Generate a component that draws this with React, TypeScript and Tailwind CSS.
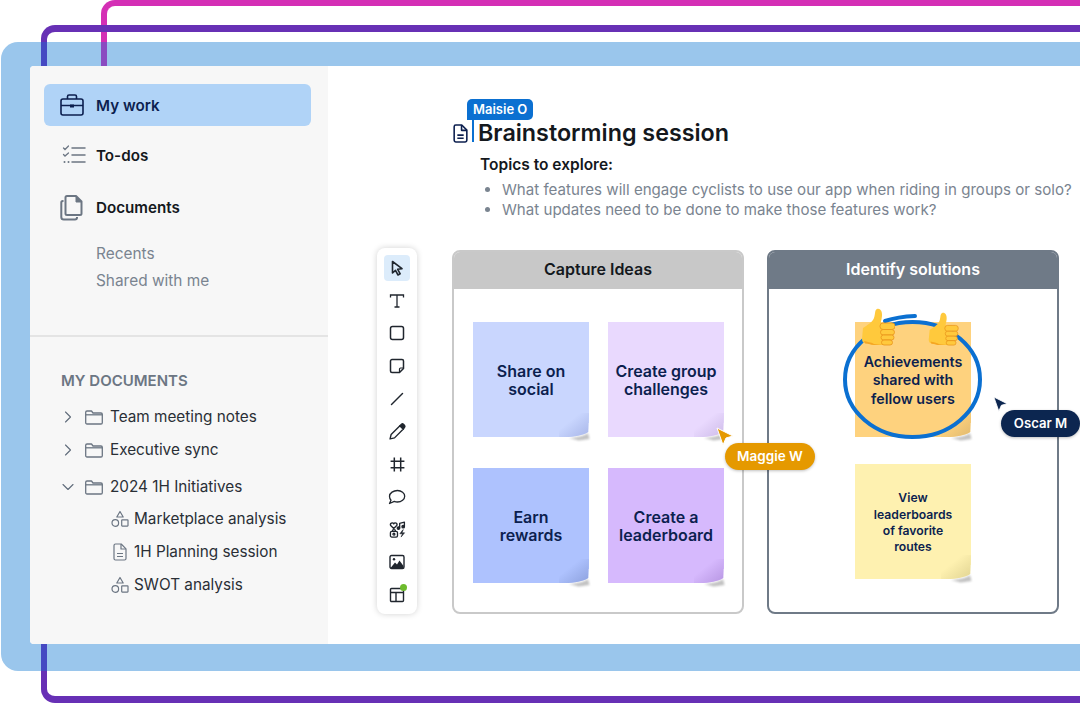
import React from 'react';
import { ChevronDown, ChevronRight } from 'lucide-react';

const Thumb = ({ className }: { className: string }) => (
  <svg viewBox="0 0 33 38" className={className}>
    <path
      fill="#FFC93C"
      d="M1 20C5 17 10 15 12 10C13.500 6 12.500 2 15 1C18 0 20.500 3 20 8C19.600 12 18.500 14 19 15L26 15L26 37L12 37C9 37 7 35 3 35C1 35 0 33 0 31Z"
    />
    <path fill="#F5A623" d="M2 33C5 34 9 34 12 36L20 37L12 37C9 37 7 35.500 3 35.500Z" />
    <g fill="#FFC93C" stroke="#E9931A" strokeWidth="0.8">
      <rect x="18" y="15" width="15" height="6.500" rx="3" />
      <rect x="18.500" y="21.500" width="14" height="5.500" rx="2.700" />
      <rect x="19" y="27" width="13" height="5" rx="2.500" />
      <rect x="19.500" y="32" width="11" height="5" rx="2.500" />
    </g>
  </svg>
);

// folded corner of a sticky note, the note's own corner sits at (30,24)
const Curl = ({ fill, shade }: { fill: string; shade: string }) => (
  <svg viewBox="0 0 36 30" className="absolute -right-[6px] -bottom-[6px] w-[36px] h-[30px]">
    <defs>
      <linearGradient id={`curl-${shade}`} x1="0.35" y1="0.35" x2="0.95" y2="0.95">
        <stop offset="0" stopColor={shade} stopOpacity="0" />
        <stop offset="1" stopColor={shade} stopOpacity="1" />
      </linearGradient>
      <filter id={`blur-${shade}`} x="-30%" y="-50%" width="160%" height="200%">
        <feGaussianBlur stdDeviation="1.300" />
      </filter>
    </defs>
    <path d="M0 10H30.500V24.500H0Z" fill="#ffffff" />
    <path d="M10 25C20 24.500 26 22.500 29 20L30.500 26L20 27.500Z" fill="#8f8f8f" opacity="0.55" filter={`url(#blur-${shade})`} />
    <path d="M30 0L29.200 19C24 22.500 15 24 6 24L0 24L0 0Z" fill={fill} />
    <path d="M30 0L29.200 19C24 22.500 15 24 6 24L0 24L0 0Z" fill={`url(#curl-${shade})`} />
  </svg>
);

type NoteProps = { bg: string; fill: string; shade: string; text: string; label: React.ReactNode };

const Note = ({ bg, fill, shade, text, label }: NoteProps) => (
  <div className={`relative w-[116px] h-[115px] flex items-center justify-center text-center font-semibold text-[#0c1f4f] ${bg} ${text}`}>
    <Curl fill={fill} shade={shade} />
    <span className="relative">{label}</span>
  </div>
);

const NavRow = ({ icon, label, cls }: { icon: React.ReactNode; label: string; cls: string }) => (
  <div className={`flex items-center h-[42px] pl-[16px] rounded-md ${cls}`}>
    <div className="w-[36px] flex justify-start">{icon}</div>
    <span className="text-[15.2px] font-semibold mt-[2px]">{label}</span>
  </div>
);

const FolderIcon = () => (
  <svg viewBox="0 0 18 15" className="w-[18px] h-[15px] text-[#6c7683] mr-[7px]" fill="none" stroke="currentColor" strokeWidth="1.300" strokeLinejoin="round">
    <path d="M2 1h4.500l1.500 2h8a1.300 1.300 0 0 1 1.300 1.300v8.400a1.300 1.300 0 0 1-1.300 1.300H2a1.300 1.300 0 0 1-1.300-1.300V2.300A1.300 1.300 0 0 1 2 1z" />
    <path d="M.7 4.800h16.600" />
  </svg>
);

const ShapesIcon = () => (
  <svg viewBox="0 0 18 18" className="w-[18px] h-[18px] text-[#6c7683]" fill="none" stroke="currentColor" strokeWidth="1.200" strokeLinejoin="round">
    <path d="M9 1.500 12.200 7H5.800z" />
    <circle cx="4.300" cy="13" r="3.300" />
    <rect x="10.700" y="9.800" width="6.300" height="6.300" rx=".5" />
  </svg>
);

const DocIcon = ({ className, width }: { className: string; width: number }) => (
  <svg viewBox="0 0 14 18" className={className} fill="none" stroke="currentColor" strokeWidth={width} strokeLinejoin="round">
    <path d="M2.500 1h5.700L13 5.800v9.700a1.500 1.500 0 0 1-1.500 1.500h-9A1.500 1.500 0 0 1 1 15.500v-13A1.500 1.500 0 0 1 2.500 1z" />
    <path d="M8 1v5h5" />
    <path d="M4 10.500h6M4 13.500h6" />
  </svg>
);

const TreeFolder = ({ label, open, cls }: { label: string; open?: boolean; cls: string }) => (
  <div className={`flex items-center h-[22px] text-[15.3px] text-[#2a2f36] ${cls}`}>
    {open ? (
      <ChevronDown className="w-[20px] h-[20px] text-[#5f6b7a] -ml-[3px] mr-[7px]" strokeWidth={1.3} />
    ) : (
      <ChevronRight className="w-[20px] h-[20px] text-[#5f6b7a] -ml-[3px] mr-[7px]" strokeWidth={1.3} />
    )}
    <FolderIcon />
    <span>{label}</span>
  </div>
);

const TreeDoc = ({ icon, label, cls }: { icon: React.ReactNode; label: string; cls: string }) => (
  <div className={`flex items-center h-[22px] pl-[50px] text-[15.3px] text-[#2a2f36] ${cls}`}>
    <div className="w-[23px] flex justify-start">{icon}</div>
    <span>{label}</span>
  </div>
);

const tool = 'w-[16px] h-[16px] text-[#20262e]';

const toolIcons = [
  <svg key="pointer" viewBox="0 0 16 16" className={tool} fill="none" stroke="currentColor" strokeWidth="1.600" strokeLinejoin="round">
    <path d="M3.500 1.500V13L6.500 10.300 9 15l2.200-1.200-2.500-4.500 4.300-.6z" />
  </svg>,
  <svg key="type" viewBox="0 0 16 16" className={tool} fill="none" stroke="currentColor" strokeWidth="1.300">
    <path d="M1.500 4.500V2h13v2.500M8 2v12M5.500 14h5" />
  </svg>,
  <svg key="rect" viewBox="0 0 16 16" className={tool} fill="none" stroke="currentColor" strokeWidth="1.500">
    <rect x="1.500" y="1.500" width="13" height="13" rx="2" />
  </svg>,
  <svg key="note" viewBox="0 0 16 16" className={tool} fill="none" stroke="currentColor" strokeWidth="1.500" strokeLinejoin="round">
    <path d="M3 1.500h10a1.500 1.500 0 0 1 1.500 1.500v7.500l-4 4H3a1.500 1.500 0 0 1-1.500-1.500V3A1.500 1.500 0 0 1 3 1.500z" />
    <path d="M14.500 10h-3a1 1 0 0 0-1 1v3.500" strokeWidth="1.200" />
  </svg>,
  <svg key="line" viewBox="0 0 16 16" className={tool} fill="none" stroke="currentColor" strokeWidth="1.500" strokeLinecap="round">
    <path d="M2.500 13.500 13.500 2.500" />
  </svg>,
  <svg key="pen" viewBox="0 0 16 16" className="w-[17px] h-[17px] text-[#20262e]" fill="none" stroke="currentColor" strokeWidth="1.300" strokeLinejoin="round">
    <path d="M1 15 2 10.800 10.300 2.500 13.500 5.700 5.200 14z" />
    <path d="M10.300 2.500 12 .9c1-.7 3 1.200 3 2.600l-1.500 2.200z" fill="currentColor" />
  </svg>,
  <svg key="frame" viewBox="0 0 16 16" className="w-[17px] h-[17px] text-[#20262e]" fill="none" stroke="currentColor" strokeWidth="1.400">
    <path d="M5 1.500v13M11 1.500v13M1.500 5h13M1.500 11h13" />
  </svg>,
  <svg key="bubble" viewBox="0 0 18 18" className="w-[18px] h-[18px] text-[#20262e]" fill="none" stroke="currentColor" strokeWidth="1.300" strokeLinejoin="round">
    <path d="M9.500 2.500c4 0 7.200 2.500 7.200 5.700S13.500 14 9.500 14c-1.200 0-2.300-.2-3.200-.6L1.500 15.500l1.500-3.300C2 11.200 1.500 9.800 1.500 8.200 1.500 5 5.500 2.500 9.500 2.500z" />
  </svg>,
  <svg key="stickers" viewBox="0 0 18 18" className="w-[17px] h-[17px] text-[#20262e]" fill="none" stroke="currentColor" strokeWidth="1.400" strokeLinecap="round" strokeLinejoin="round">
    <path d="M5 8 1.800 4.800A1.800 1.800 0 0 1 5 3a1.800 1.800 0 0 1 3.200 1.800z" />
    <path d="M11.300 7.500V2.500l5-1.200V6" />
    <circle cx="10" cy="7.500" r="1.300" fill="currentColor" />
    <circle cx="15" cy="6" r="1.300" fill="currentColor" />
    <rect x="1.500" y="11" width="7.500" height="6" rx="1.500" />
    <circle cx="5.200" cy="14" r="1" />
    <path d="M3.500 11c0-2.400 3.500-2.400 3.500 0" />
    <path d="M14.500 9.500 11.500 13.500h2.800l-1.500 3.500 3.700-4.500h-2.800l1.300-3z" fill="currentColor" strokeWidth=".6" />
  </svg>,
  <svg key="image" viewBox="0 0 16 16" className={tool} fill="none" stroke="currentColor" strokeWidth="1.400" strokeLinejoin="round">
    <rect x="1" y="1.500" width="14" height="13" rx="1.500" />
    <circle cx="5" cy="5.300" r="1.200" fill="currentColor" stroke="none" />
    <path d="M1.500 14 6 8.500l2 2L10.500 6.500 14.500 12v2z" fill="currentColor" stroke="none" />
  </svg>,
  <svg key="tmpl" viewBox="0 0 16 16" className={tool} fill="none" stroke="currentColor" strokeWidth="1.400">
    <rect x="1.500" y="1.500" width="13" height="13" rx="1" />
    <path d="M1.500 5.500h13M7 5.500v9" />
  </svg>,
];

const App = () => {
  return (
    <div className="relative w-[1080px] h-[708px] overflow-hidden bg-white" style={{ fontFamily: 'Inter, sans-serif' }}>
      {/* blue backing panel with the window inside */}
      <div className="mt-[42px] ml-[1px] h-[629px] rounded-l-[17px] bg-[#9ac6ec] pl-[29px] pt-[24px]">
        <div className="flex h-[578px] rounded-l-[4px] overflow-hidden bg-white">
          <aside className="w-[298px] bg-[#f7f7f7] flex flex-col">
            <div className="h-[271px] pt-[18px] pl-[14px] pr-[17px] border-b-2 border-[#e4e4e4]">
              <NavRow
                cls="bg-[#b0d3f7] text-[#0c1f4f]"
                label="My work"
                icon={
                  <svg viewBox="0 0 24 22" className="w-[24px] h-[22px] text-[#0c1f4f]" fill="none" stroke="currentColor" strokeWidth="1.600" strokeLinejoin="round">
                    <rect x="1" y="5" width="22" height="16" rx="2" />
                    <path d="M7.500 5V2.500A1.500 1.500 0 0 1 9 1h6a1.500 1.500 0 0 1 1.500 1.500V5" />
                    <path d="M1 11.500h22" />
                    <rect x="10" y="10.500" width="4" height="3" fill="currentColor" stroke="none" />
                  </svg>
                }
              />
              <NavRow
                cls="mt-[8px] text-[#14181d]"
                label="To-dos"
                icon={
                  <svg viewBox="0 0 24 20" className="ml-[2px] w-[24px] h-[20px] text-[#6c7683]" fill="none" stroke="currentColor" strokeWidth="1.500" strokeLinecap="round">
                    <path d="M10 3h13M10 10h13M10 17h13" />
                    <path d="M1.500 3l1.500 1.500L6.500 1M1.500 9.500l1.500 1.500 3.500-3" strokeWidth="1.300" />
                    <path d="M2.500 17h.01M6.500 17h.01" strokeWidth="2" />
                  </svg>
                }
              />
              <NavRow
                cls="mt-[10px] text-[#14181d]"
                label="Documents"
                icon={
                  <svg viewBox="0 0 23 27" className="w-[23px] h-[27px] text-[#6c7683]" fill="none" stroke="currentColor" strokeWidth="2" strokeLinejoin="round">
                    <path d="M7 2h9l5.500 5.500v12a1.500 1.500 0 0 1-1.500 1.500H7a1.500 1.500 0 0 1-1.500-1.500v-16A1.500 1.500 0 0 1 7 2z" />
                    <path d="M16 2v6h5.500" fill="currentColor" strokeWidth="1" />
                    <path d="M3.500 7H2.800A1.500 1.500 0 0 0 1.300 8.500V23a2.500 2.500 0 0 0 2.500 2.500H15a2 2 0 0 0 2-2V23" />
                  </svg>
                }
              />
              <div className="mt-[12px] ml-[52px] text-[15.4px] leading-[27px] text-[#7a8490]">
                <div>Recents</div>
                <div>Shared with me</div>
              </div>
            </div>
            <div className="pl-[31px] pt-[34px]">
              <div className="text-[15px] leading-[20px] font-semibold text-[#6c7683]">MY DOCUMENTS</div>
              <TreeFolder cls="mt-[15px]" label="Team meeting notes" />
              <TreeFolder cls="mt-[11px]" label="Executive sync" />
              <TreeFolder cls="mt-[15px]" label="2024 1H Initiatives" open />
              <TreeDoc cls="mt-[10px]" label="Marketplace analysis" icon={<ShapesIcon />} />
              <TreeDoc cls="mt-[11px]" label="1H Planning session" icon={<div className="pl-[2px]"><DocIcon className="w-[14px] h-[18px] text-[#6c7683]" width={1.2} /></div>} />
              <TreeDoc cls="mt-[11px]" label="SWOT analysis" icon={<ShapesIcon />} />
            </div>
          </aside>

          <main className="relative flex-1 min-w-0">
            <div className="pl-[125px] pt-[51px]">
              <div className="flex items-center h-[32px]">
                <DocIcon className="w-[15px] h-[19px] text-[#0c1f4f] mr-[4px]" width={1.5} />
                <div className="w-[2px] h-[22px] -mt-[4px] bg-[#0b70d1] mr-[4px]" />
                <h1 className="text-[23.3px] font-semibold text-[#14181d] whitespace-nowrap">Brainstorming session</h1>
              </div>
              <div className="pl-[27px] mt-[6px] text-[15.5px] leading-[20px] font-semibold text-[#14181d]">Topics to explore:</div>
              <ul className="pl-[49px] mt-[5px] text-[15.1px] leading-[20px] text-[#7a8490] list-disc whitespace-nowrap">
                <li>What features will engage cyclists to use our app when riding in groups or solo?</li>
                <li>What updates need to be done to make those features work?</li>
              </ul>
            </div>

            <div className="flex items-start pl-[49px] mt-[28px]">
              <div className="w-[40px] h-[366px] rounded-lg bg-white shadow-[0_0_6px_rgba(0,0,0,0.18)] flex flex-col items-center pt-[7px] gap-[6.7px]">
                {toolIcons.map((icon, i) => (
                  <div key={i} className={`relative w-[26px] h-[26px] rounded flex items-center justify-center ${i === 0 ? 'bg-[#dcecfb]' : ''}`}>
                    {icon}
                    {i === 10 && <span className="absolute right-[3px] top-[2px] w-[7px] h-[7px] rounded-full bg-[#6dbb2d]" />}
                  </div>
                ))}
              </div>

              <section className="ml-[35px] mt-[2px] w-[292px] h-[364px] border-2 border-[#c9c9c9] rounded-lg overflow-hidden shrink-0">
                <div className="-mt-[2px] h-[39px] pb-[2px] bg-[#c8c8c8] flex items-center justify-center text-[16px] font-semibold text-[#14181d]">Capture Ideas</div>
                <div className="grid grid-cols-[116px_116px] gap-x-[19px] gap-y-[31px] pl-[19px] pt-[33px]">
                  <Note bg="bg-[#c9d6fe]" fill="#c9d6fe" shade="#aab8ea" text="text-[16px] leading-[18px] pt-[1px]" label={<>Share on<br />social</>} />
                  <Note bg="bg-[#e9d9fe]" fill="#e9d9fe" shade="#cfbdea" text="text-[16px] leading-[18px] pt-[1px]" label={<>Create group<br />challenges</>} />
                  <Note bg="bg-[#aec2fe]" fill="#aec2fe" shade="#8fa3e0" text="text-[16px] leading-[18px] pt-[1px]" label={<>Earn<br />rewards</>} />
                  <Note bg="bg-[#d6b9fd]" fill="#d6b9fd" shade="#b998e4" text="text-[16px] leading-[18px] pt-[1px]" label={<>Create a<br />leaderboard</>} />
                </div>
              </section>

              <section className="ml-[23px] mt-[2px] w-[292px] h-[364px] border-2 border-[#6f7a87] rounded-lg overflow-hidden shrink-0">
                <div className="-mt-[2px] h-[39px] pb-[2px] bg-[#6f7a87] flex items-center justify-center text-[16px] font-semibold text-white">Identify solutions</div>
                <div className="flex flex-col items-center pt-[33px] gap-[27px]">
                  <Note bg="bg-[#fed27e]" fill="#fed27e" shade="#e2bb70" text="text-[14.3px] leading-[18.5px] pt-[2px]" label={<>Achievements<br />shared with<br />fellow users</>} />
                  <Note bg="bg-[#fef1b0]" fill="#fef1b0" shade="#e3d694" text="text-[12.2px] leading-[16.3px] pt-[3px]" label={<>View<br />leaderboards<br />of favorite<br />routes</>} />
                </div>
              </section>
            </div>

            {/* annotations lying over the canvas */}
            <div className="absolute left-[139px] top-[33px] h-[21px] px-[6px] rounded-t-[5px] rounded-br-[5px] bg-[#0b70d1] text-white text-[13px] leading-[21px] font-semibold">Maisie O</div>

            <svg viewBox="0 0 150 134" className="absolute left-[510px] top-[246px] w-[150px] h-[134px]" fill="none" stroke="#0b70d1" strokeLinecap="round">
              <ellipse cx="74.500" cy="67.500" rx="67.500" ry="57.500" strokeWidth="4" />
              <path d="M47 9C56 6 66 4.500 77 4" strokeWidth="4" />
            </svg>
            <Thumb className="absolute left-[534px] top-[242px] w-[33px] h-[38px]" />
            <Thumb className="absolute left-[599px] top-[246px] w-[33px] h-[34px]" />

            <svg viewBox="0 0 18 20" className="absolute left-[388px] top-[361px] w-[18px] h-[20px]">
              <path d="M1 1 L17 9 L10 11 L7 18 Z" fill="#e59900" stroke="#ffffff" strokeWidth="1" />
            </svg>
            <div className="absolute left-[397px] top-[377px] w-[90px] h-[27px] rounded-full bg-[#e59900] shadow-[0_1px_3px_rgba(0,0,0,0.25)] text-white text-[13.5px] font-semibold flex items-center justify-center">Maggie W</div>

            <svg viewBox="0 0 18 20" className="absolute left-[665px] top-[330px] w-[15px] h-[17px]">
              <path d="M1 1 L17 9 L10 11 L7 18 Z" fill="#0c2650" stroke="#ffffff" strokeWidth="1" />
            </svg>
            <div className="absolute left-[673px] top-[344px] w-[79px] h-[27px] rounded-full bg-[#0c2650] shadow-[0_1px_3px_rgba(0,0,0,0.25)] text-white text-[13.2px] font-semibold flex items-center justify-center">Oscar M</div>
          </main>
        </div>
      </div>

      {/* outline frames, with the stretches that cross the blue panel tinted */}
      <div className="absolute left-[101px] top-0 w-[1100px] h-[66px] border-l-[6px] border-t-[6px] border-[#d42fb5] rounded-tl-[14px]" />
      <div className="absolute left-[41px] top-[25px] w-[1100px] h-[41px] border-l-[6px] border-t-[7px] border-[#6730b5] rounded-tl-[14px]" />
      <div className="absolute left-[41px] top-[644px] w-[1100px] h-[59px] border-l-[6px] border-b-[7px] border-[#6730b5] rounded-bl-[14px]" />
      <div className="absolute left-[101px] top-[42px] w-[6px] h-[24px] bg-[#8a4bc0]" />
      <div className="absolute left-[41px] top-[42px] w-[6px] h-[24px] bg-[#4549c2]" />
      <div className="absolute left-[41px] top-[644px] w-[6px] h-[27px] bg-[#4549c2]" />
    </div>
  );
};

export default App;
